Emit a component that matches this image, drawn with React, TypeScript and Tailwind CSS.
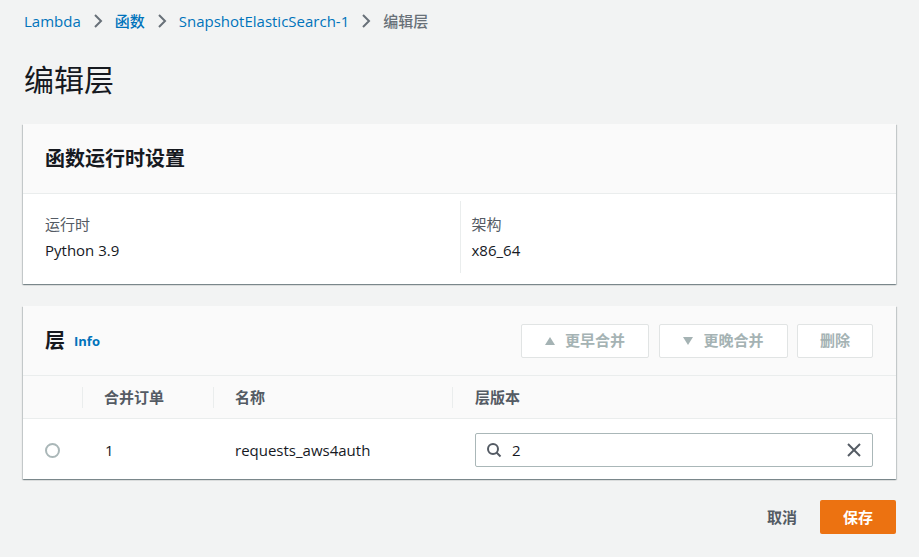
import React from "react";

const font = { fontFamily: '"Open Sans", "Noto Sans CJK SC", sans-serif' };

function Chevron() {
  return (
    <svg width="16" height="16" viewBox="0 0 16 16" className="mx-[9px] shrink-0">
      <polyline points="5,2 11,8 5,14" fill="none" stroke="#687078" strokeWidth="2" strokeLinejoin="miter" />
    </svg>
  );
}

function SearchIcon() {
  return (
    <svg width="16" height="16" viewBox="0 0 16 16">
      <circle cx="7" cy="7" r="5" fill="none" stroke="#545b64" strokeWidth="2" />
      <line x1="10.5" y1="10.5" x2="14.5" y2="14.5" stroke="#545b64" strokeWidth="2" />
    </svg>
  );
}

function XIcon() {
  return (
    <svg width="16" height="16" viewBox="0 0 16 16">
      <line x1="2" y1="2" x2="14" y2="14" stroke="#545b64" strokeWidth="2" />
      <line x1="14" y1="2" x2="2" y2="14" stroke="#545b64" strokeWidth="2" />
    </svg>
  );
}

const cardShadow =
  "shadow-[0_1px_1px_0_rgba(0,28,36,0.3),1px_1px_1px_0_rgba(0,28,36,0.15),-1px_1px_1px_0_rgba(0,28,36,0.15)]";

export default function App() {
  return (
    <div className="min-h-[557px] bg-[#f2f3f3] px-[23px] pt-[11px] text-[15px] text-[#16191f]" style={font}>
      <nav className="flex items-center h-[20px] leading-[20px] pl-[1px]">
        <span className="text-[#0073bb] font-medium">Lambda</span>
        <Chevron />
        <span className="text-[#0073bb] font-medium">函数</span>
        <Chevron />
        <span className="text-[#0073bb] font-medium">SnapshotElasticSearch-1</span>
        <Chevron />
        <span className="text-[#687078] font-medium">编辑层</span>
      </nav>

      <h1 className="mt-[31px] text-[30px] leading-[36px] font-normal pl-[1px]">编辑层</h1>

      <section className={`mt-[26px] bg-white ${cardShadow}`}>
        <div className="h-[70px] bg-[#fafafa] border-b border-[#eaeded] px-[22px] flex items-center">
          <h2 className="text-[20px] font-bold leading-[24px]">函数运行时设置</h2>
        </div>
        <div className="grid grid-cols-2 px-[22px] pt-[7px] pb-[11px]">
          <div className="py-[12px] flex flex-col gap-[4px]">
            <div className="text-[#545b64] leading-[22px]">运行时</div>
            <div className="leading-[22px]">Python 3.9</div>
          </div>
          <div className="py-[12px] pl-[11px] border-l border-[#eaeded] flex flex-col gap-[4px]">
            <div className="text-[#545b64] leading-[22px]">架构</div>
            <div className="leading-[22px]">x86_64</div>
          </div>
        </div>
      </section>

      <section className={`mt-[22px] bg-white ${cardShadow}`}>
        <div className="h-[70px] bg-[#fafafa] border-b border-[#eaeded] pl-[22px] pr-[23px] flex items-center">
          <h2 className="text-[20px] font-bold leading-[24px]">层</h2>
          <span className="ml-[9px] mt-[3px] text-[13px] font-bold text-[#0073bb]">Info</span>
          <div className="ml-auto flex items-center">
            <button className="w-[128px] h-[34px] border border-[#e1e4e4] rounded-[2px] bg-white text-[#a5b3b4] font-bold flex items-center justify-center gap-[10px]">
              <svg width="10" height="8" viewBox="0 0 10 8"><polygon points="5,0 10,8 0,8" fill="#a5b3b4" /></svg>
              更早合并
            </button>
            <button className="ml-[10px] w-[129px] h-[34px] border border-[#e1e4e4] rounded-[2px] bg-white text-[#a5b3b4] font-bold flex items-center justify-center gap-[10px]">
              <svg width="10" height="8" viewBox="0 0 10 8"><polygon points="0,0 10,0 5,8" fill="#a5b3b4" /></svg>
              更晚合并
            </button>
            <button className="ml-[9px] w-[76px] h-[34px] border border-[#e1e4e4] rounded-[2px] bg-white text-[#a5b3b4] font-bold flex items-center justify-center">
              删除
            </button>
          </div>
        </div>

        <div className="grid grid-cols-[59px_131px_239px_1fr] h-[43px] bg-[#fafafa] border-b border-[#eaeded] items-center font-bold text-[#545b64]">
          <div />
          <div className="border-l border-[#eaeded] h-[21px] pl-[21px] flex items-center">合并订单</div>
          <div className="border-l border-[#eaeded] h-[21px] pl-[21px] flex items-center">名称</div>
          <div className="border-l border-[#eaeded] h-[21px] pl-[22px] flex items-center">层版本</div>
        </div>

        <div className="grid grid-cols-[59px_131px_239px_1fr] h-[60px] items-center pt-[2px]">
          <div className="flex justify-end pr-[22px]">
            <span className="w-[15px] h-[15px] rounded-full border-2 border-[#aab7b8] bg-white" />
          </div>
          <div className="pl-[23px]">1</div>
          <div className="pl-[22px]">requests_aws4auth</div>
          <div className="pl-[23px] pr-[23px]">
            <div className="h-[34px] border border-[#aab7b8] rounded-[2px] flex items-center pl-[10px] pr-[10px]">
              <SearchIcon />
              <span className="ml-[10px]">2</span>
              <span className="ml-auto flex"><XIcon /></span>
            </div>
          </div>
        </div>
      </section>

      <div className="mt-[21px] flex items-center justify-end pb-[23px]">
        <span className="font-bold text-[#545b64] mr-[23px]">取消</span>
        <button className="w-[76px] h-[34px] bg-[#ec7211] rounded-[2px] text-white font-bold">保存</button>
      </div>
    </div>
  );
}
